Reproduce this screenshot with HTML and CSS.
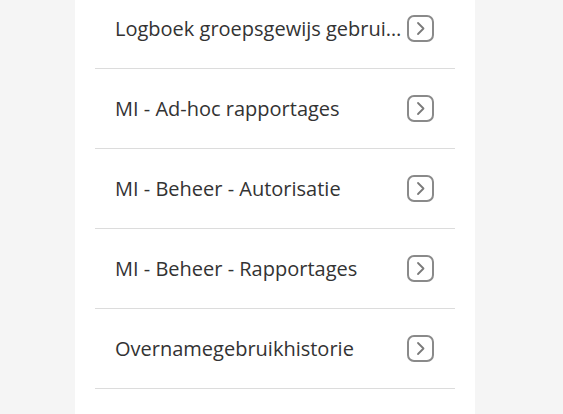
FILE: index.html
```html
<!DOCTYPE html>
<html lang="nl">
<head>
<meta charset="utf-8">
<link rel="stylesheet" href="styles.css">
</head>
<body>
<div class="panel">
  <ul class="list">
    <li class="row"><span class="label">Logboek groepsgewijs gebruikershistorie</span><span class="btn"><svg viewBox="0 0 27 27" width="27" height="27"><rect x="1" y="1" width="25" height="25" rx="6" ry="6" fill="none" stroke="#8a8a8a" stroke-width="2"/><path d="M11 8 L16.5 13.5 L11 19" fill="none" stroke="#7a7a7a" stroke-width="1.8" stroke-linecap="round" stroke-linejoin="round"/></svg></span></li>
    <li class="row"><span class="label">MI - Ad-hoc rapportages</span><span class="btn"><svg viewBox="0 0 27 27" width="27" height="27"><rect x="1" y="1" width="25" height="25" rx="6" ry="6" fill="none" stroke="#8a8a8a" stroke-width="2"/><path d="M11 8 L16.5 13.5 L11 19" fill="none" stroke="#7a7a7a" stroke-width="1.8" stroke-linecap="round" stroke-linejoin="round"/></svg></span></li>
    <li class="row"><span class="label">MI - Beheer - Autorisatie</span><span class="btn"><svg viewBox="0 0 27 27" width="27" height="27"><rect x="1" y="1" width="25" height="25" rx="6" ry="6" fill="none" stroke="#8a8a8a" stroke-width="2"/><path d="M11 8 L16.5 13.5 L11 19" fill="none" stroke="#7a7a7a" stroke-width="1.8" stroke-linecap="round" stroke-linejoin="round"/></svg></span></li>
    <li class="row"><span class="label">MI - Beheer - Rapportages</span><span class="btn"><svg viewBox="0 0 27 27" width="27" height="27"><rect x="1" y="1" width="25" height="25" rx="6" ry="6" fill="none" stroke="#8a8a8a" stroke-width="2"/><path d="M11 8 L16.5 13.5 L11 19" fill="none" stroke="#7a7a7a" stroke-width="1.8" stroke-linecap="round" stroke-linejoin="round"/></svg></span></li>
    <li class="row"><span class="label">Overnamegebruikhistorie</span><span class="btn"><svg viewBox="0 0 27 27" width="27" height="27"><rect x="1" y="1" width="25" height="25" rx="6" ry="6" fill="none" stroke="#8a8a8a" stroke-width="2"/><path d="M11 8 L16.5 13.5 L11 19" fill="none" stroke="#7a7a7a" stroke-width="1.8" stroke-linecap="round" stroke-linejoin="round"/></svg></span></li>
  </ul>
</div>
</body>
</html>
```
FILE: styles.css
```css
html, body {
  margin: 0;
  padding: 0;
  background: #f5f5f5;
  height: 100%;
  overflow: hidden;
}
body {
  font-family: "Open Sans", "Liberation Sans", sans-serif;
  color: #333333;
}
.panel {
  width: 400px;
  margin-left: 75px;
  height: 414px;
  background: #ffffff;
  padding: 0 20px;
  box-sizing: border-box;
  overflow: hidden;
}
.list {
  list-style: none;
  margin: -11px 0 0 0;
  padding: 0;
}
.row {
  display: flex;
  align-items: center;
  height: 79px;
  border-bottom: 1px solid #dcdcdc;
  padding: 0 21px 0 20px;
  gap: 5px;
}
.label {
  flex: 1;
  min-width: 0;
  font-size: 20px;
  white-space: nowrap;
  overflow: hidden;
  text-overflow: ellipsis;
}
.btn {
  flex: none;
  width: 27px;
  height: 27px;
  display: block;
}
.btn svg {
  display: block;
}
```
